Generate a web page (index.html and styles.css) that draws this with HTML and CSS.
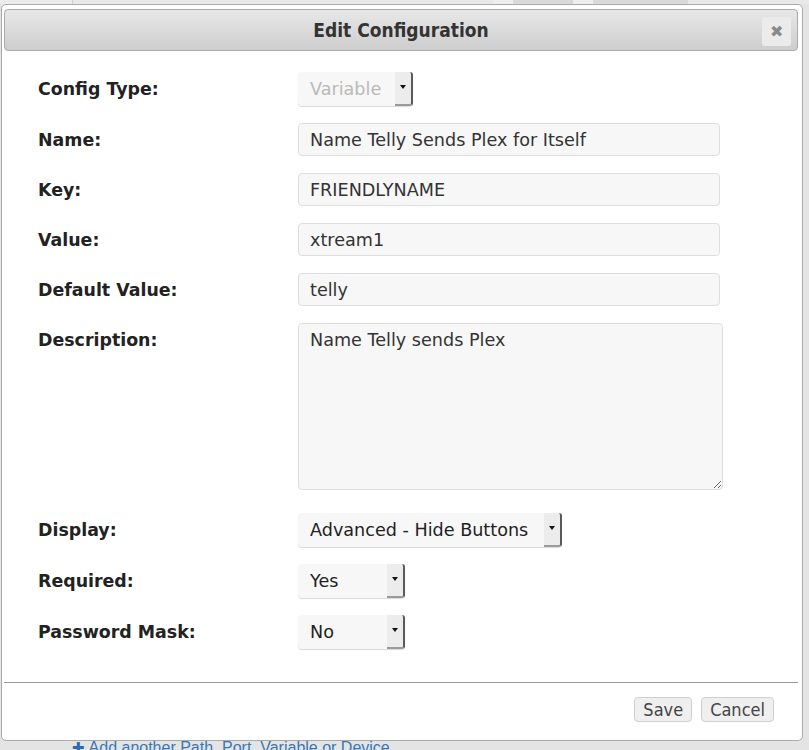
FILE: index.html
```html
<!DOCTYPE html>
<html lang="en">
<head>
    <meta charset="UTF-8">
    <meta name="viewport" content="width=device-width, initial-scale=1.0">
    <title>Edit Configuration</title>
    <link rel="stylesheet" href="styles.css">
</head>
<body>
    <div class="page-tabs">
        <span class="tab tab-light"></span>
        <span class="tab tab-mid"></span>
        <span class="tab tab-edge"></span>
        <span class="tab tab-dark"></span>
        <span class="tab tab-edge"></span>
        <span class="tab tab-dark wide"></span>
        <span class="tab tab-mid rest"></span>
    </div>

    <div class="dialog">
        <div class="titlebar">
            <span></span>
            <h1>Edit Configuration</h1>
            <button class="close" title="Close">&#10006;</button>
        </div>

        <form class="form">
            <label>Config Type:</label>
            <div class="select sel-type disabled">
                <select disabled>
                    <option>Variable</option>
                </select>
                <span class="caret"></span>
            </div>

            <label for="name">Name:</label>
            <input type="text" id="name" value="Name Telly Sends Plex for Itself">

            <label for="key">Key:</label>
            <input type="text" id="key" value="FRIENDLYNAME">

            <label for="value">Value:</label>
            <input type="text" id="value" value="xtream1">

            <label for="default">Default Value:</label>
            <input type="text" id="default" value="telly">

            <label for="description">Description:</label>
            <textarea id="description">Name Telly sends Plex</textarea>

            <label>Display:</label>
            <div class="select sel-display">
                <select>
                    <option>Advanced - Hide Buttons</option>
                </select>
                <span class="caret"></span>
            </div>

            <label>Required:</label>
            <div class="select sel-small">
                <select>
                    <option>Yes</option>
                </select>
                <span class="caret"></span>
            </div>

            <label>Password Mask:</label>
            <div class="select sel-small">
                <select>
                    <option>No</option>
                </select>
                <span class="caret"></span>
            </div>
        </form>

        <div class="footer">
            <button class="btn">Save</button>
            <button class="btn">Cancel</button>
        </div>
    </div>

    <a class="add-link" href="#"><span class="plus">&#10010;</span> Add another Path, Port, Variable or Device</a>
</body>
</html>
```

FILE: styles.css
```css
html, body {
    margin: 0;
    padding: 0;
    height: 100%;
    overflow: hidden;
}

body {
    background-color: #e4e4e4;
    font-family: 'DejaVu Sans', Verdana, sans-serif;
    color: #333;
}

/* bits of the page behind the dialog */
.page-tabs {
    display: flex;
    height: 4px;
    background-color: #e8e8e8;
}
.tab {
    display: block;
    height: 4px;
}
.tab-light {
    width: 72px;
    background-color: #ececec;
    border-right: 1px solid #cfcfcf;
}
.tab-mid {
    width: 420px;
    background-color: #e9e9e9;
}
.tab-edge {
    width: 20px;
    background-color: #efefef;
}
.tab-dark {
    width: 60px;
    background-color: #d9d9d9;
}
.tab-dark.wide {
    width: 95px;
}
.tab-mid.rest {
    flex: 1;
}

.dialog {
    width: 802px;
    height: 737px;
    margin-left: 1px;
    padding: 4px 4px 0 2px;
    box-sizing: border-box;
    background-color: #ffffff;
    border: 1px solid #a9a9a9;
    border-radius: 5px;
    display: flex;
    flex-direction: column;
}

.titlebar {
    height: 42px;
    box-sizing: border-box;
    border: 1px solid #aaaaaa;
    border-radius: 4px;
    background: linear-gradient(#e8e8e8, #cdcdcd);
    display: grid;
    grid-template-columns: 1fr auto 1fr;
    align-items: center;
}
.titlebar h1 {
    margin: 0;
    font-family: 'DejaVu Sans Condensed', 'DejaVu Sans', sans-serif;
    font-size: 19px;
    font-weight: bold;
    color: #333;
}
.close {
    justify-self: end;
    width: 29px;
    height: 29px;
    margin-right: 6px;
    margin-top: 3px;
    padding: 0;
    border: none;
    border-radius: 3px;
    background-color: #ebebeb;
    color: #8a8a8a;
    font-size: 16px;
    line-height: 29px;
    text-align: center;
    cursor: pointer;
}

.form {
    display: grid;
    grid-template-columns: 260px auto;
    row-gap: 17px;
    padding: 21px 0 0 34px;
    align-items: start;
    justify-items: start;
}
.form label {
    font-size: 17.4px;
    font-weight: bold;
    line-height: 32px;
    padding-top: 1px;
    color: #222;
}

.form input,
.form textarea {
    font-family: 'DejaVu Sans', Verdana, sans-serif;
    font-size: 17.6px;
    color: #333;
    background-color: #f7f7f7;
    border: 1px solid #dedede;
    border-radius: 4px;
    box-sizing: border-box;
    margin: 0;
}
.form input {
    width: 422px;
    height: 33px;
    padding: 0 11px;
}
.form textarea {
    width: 425px;
    height: 167px;
    padding: 6px 11px;
    margin-bottom: 6px;
    resize: both;
}

.select {
    display: inline-flex;
    height: 34px;
    background-color: #f7f7f7;
    border-radius: 4px;
    box-shadow: 0 1px 1px #d8d8d8;
}
.select select {
    flex: 1;
    appearance: none;
    -webkit-appearance: none;
    border: none;
    background: transparent;
    font-family: 'DejaVu Sans', Verdana, sans-serif;
    font-size: 17.6px;
    color: #222;
    padding: 0 0 0 12px;
    margin: 0;
    outline: none;
}
.select.disabled select {
    color: #a0a0a0;
}
.caret {
    width: 18px;
    background-color: #ececec;
    border-right: 2px solid #5a5a5a;
    border-bottom: 2px solid #9a9a9a;
    border-radius: 0 3px 3px 0;
    box-sizing: border-box;
    display: flex;
    align-items: center;
    justify-content: center;
}
.caret::before {
    content: "";
    border-left: 3px solid transparent;
    border-right: 3px solid transparent;
    border-top: 4px solid #111;
    margin-top: -2px;
}
.sel-type {
    width: 115px;
}
.sel-display {
    width: 264px;
}
.sel-small {
    width: 107px;
}

.footer {
    margin-top: 33px;
    border-top: 1px solid #999;
    padding: 14px 24px 0 0;
    display: flex;
    justify-content: flex-end;
    gap: 9px;
}
.btn {
    height: 25px;
    padding: 0 8px;
    font-family: 'DejaVu Sans Condensed', 'DejaVu Sans', sans-serif;
    font-size: 18px;
    line-height: 23px;
    color: #444;
    background-color: #efefef;
    border: 1px solid #cfcfcf;
    border-radius: 4px;
    cursor: pointer;
}
.btn:hover {
    background-color: #e2e2e2;
}

.add-link {
    display: block;
    margin: -3px 0 0 72px;
    font-family: 'Liberation Sans', Arial, sans-serif;
    font-size: 16px;
    line-height: 20px;
    color: #3a77b6;
    text-decoration: none;
}
.plus {
    font-size: 15px;
    color: #2f6aa8;
}
```
